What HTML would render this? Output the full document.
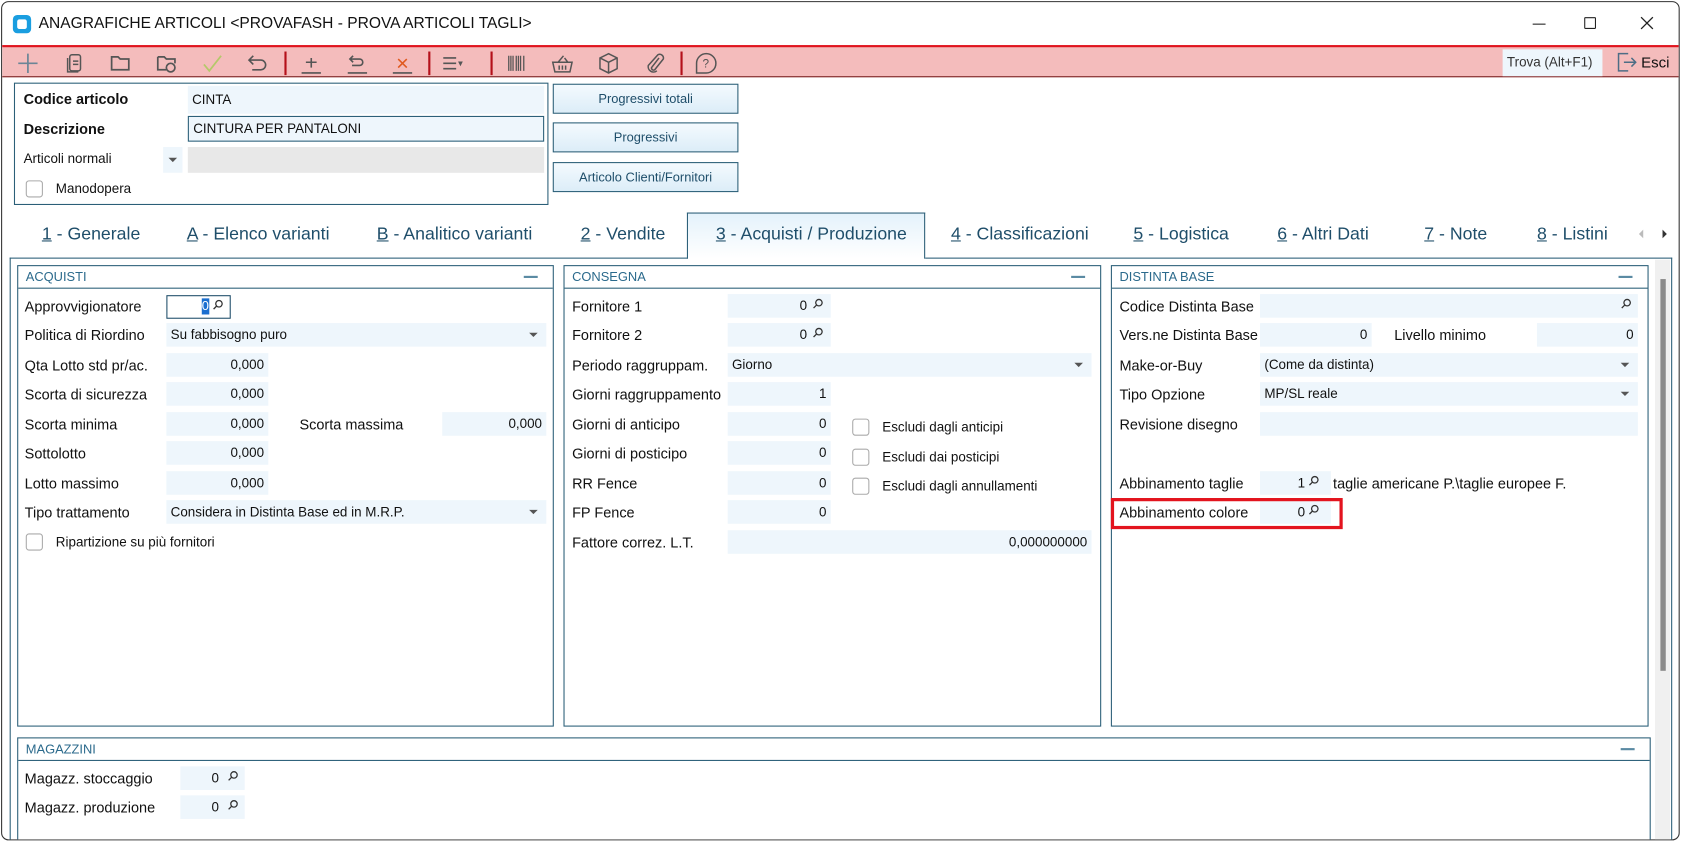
<!DOCTYPE html>
<html><head><meta charset="utf-8"><style>
*{box-sizing:border-box;margin:0;padding:0}
html,body{width:1683px;height:843px;overflow:hidden;background:#fff}
#w{position:absolute;left:0;top:0;width:1568px;height:786px;transform:scale(1.0733);transform-origin:0 0;font-family:"Liberation Sans",Arial,sans-serif;font-size:12.5px;color:#111}
.a{position:absolute;white-space:nowrap}
.win{position:absolute;left:1px;top:1px;width:1564px;height:782px;border:1px solid #333;border-radius:7px;background:#fff;overflow:hidden}
.tb{left:0;top:40px;width:1566px;height:30px;background:#f4bcbc;border-top:2px solid #e0141e;border-bottom:1px solid #7a2020}
.sep{position:absolute;top:4px;width:2px;height:22px;background:#b4101a}
.ic{position:absolute;top:4px;width:22px;height:22px}
.inp{position:absolute;background:#eef6fc;height:22px;line-height:22px;padding:0 4px}
.r{text-align:right}
.panel{position:absolute;border:1px solid #2b5f78;background:#fff}
.ph{position:absolute;left:0;right:0;top:0;height:21px;border-bottom:1px solid #2b5f78;color:#2b6a8c;font-size:12px;line-height:20px;padding-left:7px}
.ph i{position:absolute;right:14px;top:9px;width:13px;height:2px;background:#5a8aa3}
.lab{position:absolute;font-size:13.5px}
.srch{position:absolute;width:10px;height:10px}
.cb{position:absolute;width:16px;height:16px;border:1px solid #aaa;border-radius:3px;background:#fff}
.dd{position:absolute;right:8px;top:9px;border-left:4px solid transparent;border-right:4px solid transparent;border-top:4px solid #555}
.btn{position:absolute;left:513px;width:173px;height:28px;border:1px solid #2b5f78;background:linear-gradient(#f4fafe,#dcedf8);color:#1f4e6a;text-align:center;line-height:26px;font-size:12px}
.tab{position:absolute;top:207px;font-size:16.5px;color:#1f4e6a}
.tab u{text-decoration:underline}
</style></head><body><div id="w">
<div class="win">
<div class="a" style="left:10px;top:12px;width:17px;height:17px;border-radius:4px;background:#1a9ee0"><div style="position:absolute;left:4px;top:4px;width:9px;height:9px;border-radius:2px;background:#fff"></div></div>
<div class="a" style="left:34px;top:12px;font-size:14.5px">ANAGRAFICHE ARTICOLI &lt;PROVAFASH - PROVA ARTICOLI TAGLI&gt;</div>
<div class="a" style="left:1426px;top:20px;width:12px;height:1px;background:#222"></div>
<div class="a" style="left:1474px;top:14px;width:11px;height:11px;border:1px solid #222;border-radius:1px"></div>
<svg class="a" style="left:1526px;top:13px" width="13" height="13" viewBox="0 0 13 13" stroke="#222" stroke-width="1.2"><path d="M1 1l11 11M12 1L1 12"/></svg>
<div class="a tb">
<svg class="ic" style="left:13px" viewBox="0 0 22 22"><path d="M11 2v18M2 11h18" stroke="#6b8596" stroke-width="1.6"/></svg>
<svg class="ic" style="left:57px" viewBox="0 0 22 22" fill="none" stroke="#555" stroke-width="1.4"><rect x="6" y="3" width="10" height="15" rx="2"/><path d="M4 6v13h10M9 9h5M9 12h5"/></svg>
<svg class="ic" style="left:99px" viewBox="0 0 22 22" fill="none" stroke="#555" stroke-width="1.6"><path d="M3 5h6l2 2h8v10H3z"/></svg>
<svg class="ic" style="left:142px" viewBox="0 0 22 22" fill="none" stroke="#555" stroke-width="1.6"><path d="M3 5h6l2 2h8v4M3 5v12h8"/><circle cx="15" cy="15" r="4"/></svg>
<svg class="ic" style="left:185px" viewBox="0 0 22 22" fill="none" stroke="#b5c86a" stroke-width="1.6"><path d="M3 12l5 6L19 4"/></svg>
<svg class="ic" style="left:227px" viewBox="0 0 22 22" fill="none" stroke="#555" stroke-width="1.5"><path d="M7 4L3 8l4 4M3 8h11a4 4 0 010 9H6"/></svg>
<div class="sep" style="left:263px"></div>
<svg class="ic" style="left:277px" viewBox="0 0 22 22" fill="none" stroke="#555" stroke-width="1.5"><path d="M2 20h18M11 6v9M6 10h10"/></svg>
<svg class="ic" style="left:320px" viewBox="0 0 22 22" fill="none" stroke="#555" stroke-width="1.5"><path d="M2 20h18M7 4L4 7l3 3M4 7h9a3 3 0 010 6H6"/></svg>
<svg class="ic" style="left:362px" viewBox="0 0 22 22" fill="none" stroke-width="1.5"><path d="M2 20h18" stroke="#555"/><path d="M7 7l8 8M15 7l-8 8" stroke="#e05a20"/></svg>
<div class="sep" style="left:397px"></div>
<svg class="ic" style="left:408px" viewBox="0 0 22 22" fill="none" stroke="#555" stroke-width="1.5"><path d="M3 6h12M3 11h12M3 16h12"/><path d="M18 10l2 0-1 2z" fill="#333"/></svg>
<div class="sep" style="left:455px"></div>
<svg class="ic" style="left:468px" viewBox="0 0 22 22" stroke="#555"><path d="M4 4v14M6 4v14M8 4v14M11 4v14M13 4v14M15 4v14M18 4v14" stroke-width="1.2"/></svg>
<svg class="ic" style="left:511px" viewBox="0 0 22 22" fill="none" stroke="#555" stroke-width="1.4"><path d="M2 10h18l-2 9H4z M7 10l5-6M13 6l3 4M8 13v4M11 13v4M14 13v4"/></svg>
<svg class="ic" style="left:554px" viewBox="0 0 22 22" fill="none" stroke="#555" stroke-width="1.4"><path d="M11 2l8 4v10l-8 4-8-4V6zM3 6l8 4 8-4M11 10v10"/></svg>
<svg class="ic" style="left:597px" viewBox="0 0 22 22" fill="none" stroke="#555" stroke-width="1.4"><path d="M15 6l-7 9a2 2 0 003 2l8-10a3.5 3.5 0 00-5-4L5 13a5 5 0 008 5"/></svg>
<div class="sep" style="left:632px"></div>
<svg class="ic" style="left:645px" viewBox="0 0 22 22" fill="none" stroke="#555" stroke-width="1.4"><path d="M11 2a9 9 0 110 18H2v-9a9 9 0 019-9z"/><text x="7.5" y="15" font-size="11" fill="#555" stroke="none" font-family="Liberation Sans">?</text></svg>
<div class="a" style="left:1398px;top:2px;width:93px;height:25px;background:#eef6fc;font-size:12.5px;line-height:24px;padding-left:4px;color:#333">Trova (Alt+F1)</div>
<svg class="ic" style="left:1503px;top:3px" viewBox="0 0 22 22" fill="none" stroke="#4d6d85" stroke-width="1.4"><path d="M12 3H3v16h9M8 11h11M15 7l4 4-4 4"/></svg>
<div class="a" style="left:1527px;top:6px;font-size:14px">Esci</div>
</div>
<div class="a" style="left:11px;top:75px;width:498px;height:114px;border:1px solid #2b5f78"></div>
<div class="lab" style="left:20px;top:83px;font-weight:bold">Codice articolo</div>
<div class="inp" style="left:173px;top:78px;width:332px;height:26px;line-height:26px">CINTA</div>
<div class="lab" style="left:20px;top:111px;font-weight:bold">Descrizione</div>
<div class="inp" style="left:173px;top:106px;width:332px;height:24px;line-height:22px;border:1px solid #2b5f78">CINTURA PER PANTALONI</div>
<div class="lab" style="left:20px;top:139px;font-size:12.5px">Articoli normali</div>
<div class="a" style="left:150px;top:135px;width:18px;height:24px;background:#eef6fc"><div class="dd" style="right:5px;top:10px"></div></div>
<div class="a" style="left:173px;top:135px;width:332px;height:24px;background:#e8e8e8"></div>
<div class="cb" style="left:22px;top:166px"></div>
<div class="lab" style="left:50px;top:167px;font-size:12.5px">Manodopera</div>
<div class="btn" style="top:76px">Progressivi totali</div>
<div class="btn" style="top:112px">Progressivi</div>
<div class="btn" style="top:149px">Articolo Clienti/Fornitori</div>
<div class="a" style="left:638px;top:196px;width:222px;height:43px;border:1px solid #2b5f78;border-bottom:none;background:linear-gradient(#e4f2fb,#fff)"></div>
<div class="a" style="left:7px;top:238px;width:632px;height:1px;background:#2b5f78"></div>
<div class="a" style="left:860px;top:238px;width:696px;height:1px;background:#2b5f78"></div>
<div class="a" style="left:7px;top:238px;width:1px;height:546px;background:#2b5f78"></div>
<div class="a" style="left:1555px;top:238px;width:1px;height:546px;background:#2b5f78"></div>
<div class="tab" style="left:37px"><u>1</u> - Generale</div>
<div class="tab" style="left:172px"><u>A</u> - Elenco varianti</div>
<div class="tab" style="left:349px"><u>B</u> - Analitico varianti</div>
<div class="tab" style="left:539px"><u>2</u> - Vendite</div>
<div class="tab" style="left:665px"><u>3</u> - Acquisti / Produzione</div>
<div class="tab" style="left:884px"><u>4</u> - Classificazioni</div>
<div class="tab" style="left:1054px"><u>5</u> - Logistica</div>
<div class="tab" style="left:1188px"><u>6</u> - Altri Dati</div>
<div class="tab" style="left:1325px"><u>7</u> - Note</div>
<div class="tab" style="left:1430px"><u>8</u> - Listini</div>
<div class="a" style="left:1525px;top:212px;border-top:4px solid transparent;border-bottom:4px solid transparent;border-right:4px solid #bbb"></div>
<div class="a" style="left:1547px;top:212px;border-top:4px solid transparent;border-bottom:4px solid transparent;border-left:4px solid #333"></div>
<div class="a" style="left:1540px;top:240px;width:14px;height:545px;background:#f0f0f0"></div>
<div class="a" style="left:1545px;top:258px;width:5px;height:365px;background:#8a8a8a"></div>

<div class="panel" style="left:14px;top:245px;width:500px;height:430px"><div class="ph">ACQUISTI<i></i></div></div>
<div class="lab" style="left:21px;top:276px">Approvvigionatore</div>
<div class="a" style="left:153px;top:273px;width:60px;height:22px;border:1px solid #1f4e6a;background:#fff"><span style="position:absolute;left:32px;top:2px;background:#1b6fd0;color:#fff;font-size:12px;line-height:15px">0</span></div>
<div class="lab" style="left:21px;top:303px">Politica di Riordino</div>
<div class="inp" style="left:153px;top:299px;width:354px;font-size:12.5px">Su fabbisogno puro<div class="dd"></div></div>
<div class="lab" style="left:21px;top:331px">Qta Lotto std pr/ac.</div>
<div class="inp r" style="left:153px;top:327px;width:95px;font-size:12.5px">0,000</div>
<div class="lab" style="left:21px;top:358px">Scorta di sicurezza</div>
<div class="inp r" style="left:153px;top:354px;width:95px;font-size:12.5px">0,000</div>
<div class="lab" style="left:21px;top:386px">Scorta minima</div>
<div class="inp r" style="left:153px;top:382px;width:95px;font-size:12.5px">0,000</div>
<div class="lab" style="left:277px;top:386px">Scorta massima</div>
<div class="inp r" style="left:410px;top:382px;width:97px;font-size:12.5px">0,000</div>
<div class="lab" style="left:21px;top:413px">Sottolotto</div>
<div class="inp r" style="left:153px;top:409px;width:95px;font-size:12.5px">0,000</div>
<div class="lab" style="left:21px;top:441px">Lotto massimo</div>
<div class="inp r" style="left:153px;top:437px;width:95px;font-size:12.5px">0,000</div>
<div class="lab" style="left:21px;top:468px">Tipo trattamento</div>
<div class="inp" style="left:153px;top:464px;width:354px;font-size:12.5px">Considera in Distinta Base ed in M.R.P.<div class="dd"></div></div>
<div class="cb" style="left:22px;top:495px"></div>
<div class="lab" style="left:50px;top:496px;font-size:12.5px">Ripartizione su più fornitori</div>

<div class="panel" style="left:523px;top:245px;width:501px;height:430px"><div class="ph">CONSEGNA<i></i></div></div>
<div class="lab" style="left:531px;top:276px">Fornitore 1</div>
<div class="inp r" style="left:676px;top:272px;width:96px;padding-right:22px;font-size:12.5px">0</div>
<div class="lab" style="left:531px;top:303px">Fornitore 2</div>
<div class="inp r" style="left:676px;top:299px;width:96px;padding-right:22px;font-size:12.5px">0</div>
<div class="lab" style="left:531px;top:331px">Periodo raggruppam.</div>
<div class="inp" style="left:676px;top:327px;width:339px;font-size:12.5px">Giorno<div class="dd"></div></div>
<div class="lab" style="left:531px;top:358px">Giorni raggruppamento</div>
<div class="inp r" style="left:676px;top:354px;width:96px;font-size:12.5px">1</div>
<div class="lab" style="left:531px;top:386px">Giorni di anticipo</div>
<div class="inp r" style="left:676px;top:382px;width:96px;font-size:12.5px">0</div>
<div class="lab" style="left:531px;top:413px">Giorni di posticipo</div>
<div class="inp r" style="left:676px;top:409px;width:96px;font-size:12.5px">0</div>
<div class="lab" style="left:531px;top:441px">RR Fence</div>
<div class="inp r" style="left:676px;top:437px;width:96px;font-size:12.5px">0</div>
<div class="lab" style="left:531px;top:468px">FP Fence</div>
<div class="inp r" style="left:676px;top:464px;width:96px;font-size:12.5px">0</div>
<div class="lab" style="left:531px;top:496px">Fattore correz. L.T.</div>
<div class="inp r" style="left:676px;top:492px;width:339px;font-size:12.5px">0,000000000</div>
<div class="cb" style="left:792px;top:388px"></div><div class="lab" style="left:820px;top:389px;font-size:12.5px">Escludi dagli anticipi</div>
<div class="cb" style="left:792px;top:416px"></div><div class="lab" style="left:820px;top:417px;font-size:12.5px">Escludi dai posticipi</div>
<div class="cb" style="left:792px;top:443px"></div><div class="lab" style="left:820px;top:444px;font-size:12.5px">Escludi dagli annullamenti</div>

<div class="panel" style="left:1033px;top:245px;width:501px;height:430px"><div class="ph">DISTINTA BASE<i></i></div></div>
<div class="lab" style="left:1041px;top:276px">Codice Distinta Base</div>
<div class="inp" style="left:1172px;top:272px;width:352px"></div>
<div class="lab" style="left:1041px;top:303px">Vers.ne Distinta Base</div>
<div class="inp r" style="left:1172px;top:299px;width:104px;font-size:12.5px">0</div>
<div class="lab" style="left:1297px;top:303px">Livello minimo</div>
<div class="inp r" style="left:1430px;top:299px;width:94px;font-size:12.5px">0</div>
<div class="lab" style="left:1041px;top:331px">Make-or-Buy</div>
<div class="inp" style="left:1172px;top:327px;width:352px;font-size:12.5px">(Come da distinta)<div class="dd"></div></div>
<div class="lab" style="left:1041px;top:358px">Tipo Opzione</div>
<div class="inp" style="left:1172px;top:354px;width:352px;font-size:12.5px">MP/SL reale<div class="dd"></div></div>
<div class="lab" style="left:1041px;top:386px">Revisione disegno</div>
<div class="inp" style="left:1172px;top:382px;width:352px"></div>
<div class="lab" style="left:1041px;top:441px">Abbinamento taglie</div>
<div class="inp r" style="left:1172px;top:437px;width:66px;padding-right:24px;font-size:12.5px">1</div>
<div class="lab" style="left:1240px;top:441px">taglie americane P.\taglie europee F.</div>
<div class="lab" style="left:1041px;top:468px">Abbinamento colore</div>
<div class="inp r" style="left:1172px;top:464px;width:66px;padding-right:24px;font-size:12.5px">0</div>
<div class="a" style="left:1033px;top:462px;width:216px;height:29px;border:3px solid #e3141e"></div>

<div class="panel" style="left:14px;top:685px;width:1522px;height:110px"><div class="ph">MAGAZZINI<i></i></div></div>
<div class="lab" style="left:21px;top:716px">Magazz. stoccaggio</div>
<div class="inp r" style="left:166px;top:712px;width:60px;padding-right:24px;font-size:12.5px">0</div>
<div class="lab" style="left:21px;top:743px">Magazz. produzione</div>
<div class="inp r" style="left:166px;top:739px;width:60px;padding-right:24px;font-size:12.5px">0</div>
</div>
<svg class="srch a" style="left:198px;top:279px" viewBox="0 0 10 10" fill="none" stroke="#333" stroke-width="1.2"><circle cx="6" cy="4" r="3"/><path d="M4 6L1 9"/></svg>
<svg class="srch a" style="left:1510px;top:278px" viewBox="0 0 10 10" fill="none" stroke="#333" stroke-width="1.2"><circle cx="6" cy="4" r="3"/><path d="M4 6L1 9"/></svg>
<svg class="srch a" style="left:757px;top:278px" viewBox="0 0 10 10" fill="none" stroke="#333" stroke-width="1.2"><circle cx="6" cy="4" r="3"/><path d="M4 6L1 9"/></svg>
<svg class="srch a" style="left:757px;top:305px" viewBox="0 0 10 10" fill="none" stroke="#333" stroke-width="1.2"><circle cx="6" cy="4" r="3"/><path d="M4 6L1 9"/></svg>
<svg class="srch a" style="left:1219px;top:443px" viewBox="0 0 10 10" fill="none" stroke="#333" stroke-width="1.2"><circle cx="6" cy="4" r="3"/><path d="M4 6L1 9"/></svg>
<svg class="srch a" style="left:1219px;top:470px" viewBox="0 0 10 10" fill="none" stroke="#333" stroke-width="1.2"><circle cx="6" cy="4" r="3"/><path d="M4 6L1 9"/></svg>
<svg class="srch a" style="left:212px;top:718px" viewBox="0 0 10 10" fill="none" stroke="#333" stroke-width="1.2"><circle cx="6" cy="4" r="3"/><path d="M4 6L1 9"/></svg>
<svg class="srch a" style="left:212px;top:745px" viewBox="0 0 10 10" fill="none" stroke="#333" stroke-width="1.2"><circle cx="6" cy="4" r="3"/><path d="M4 6L1 9"/></svg>
</div></body></html>
